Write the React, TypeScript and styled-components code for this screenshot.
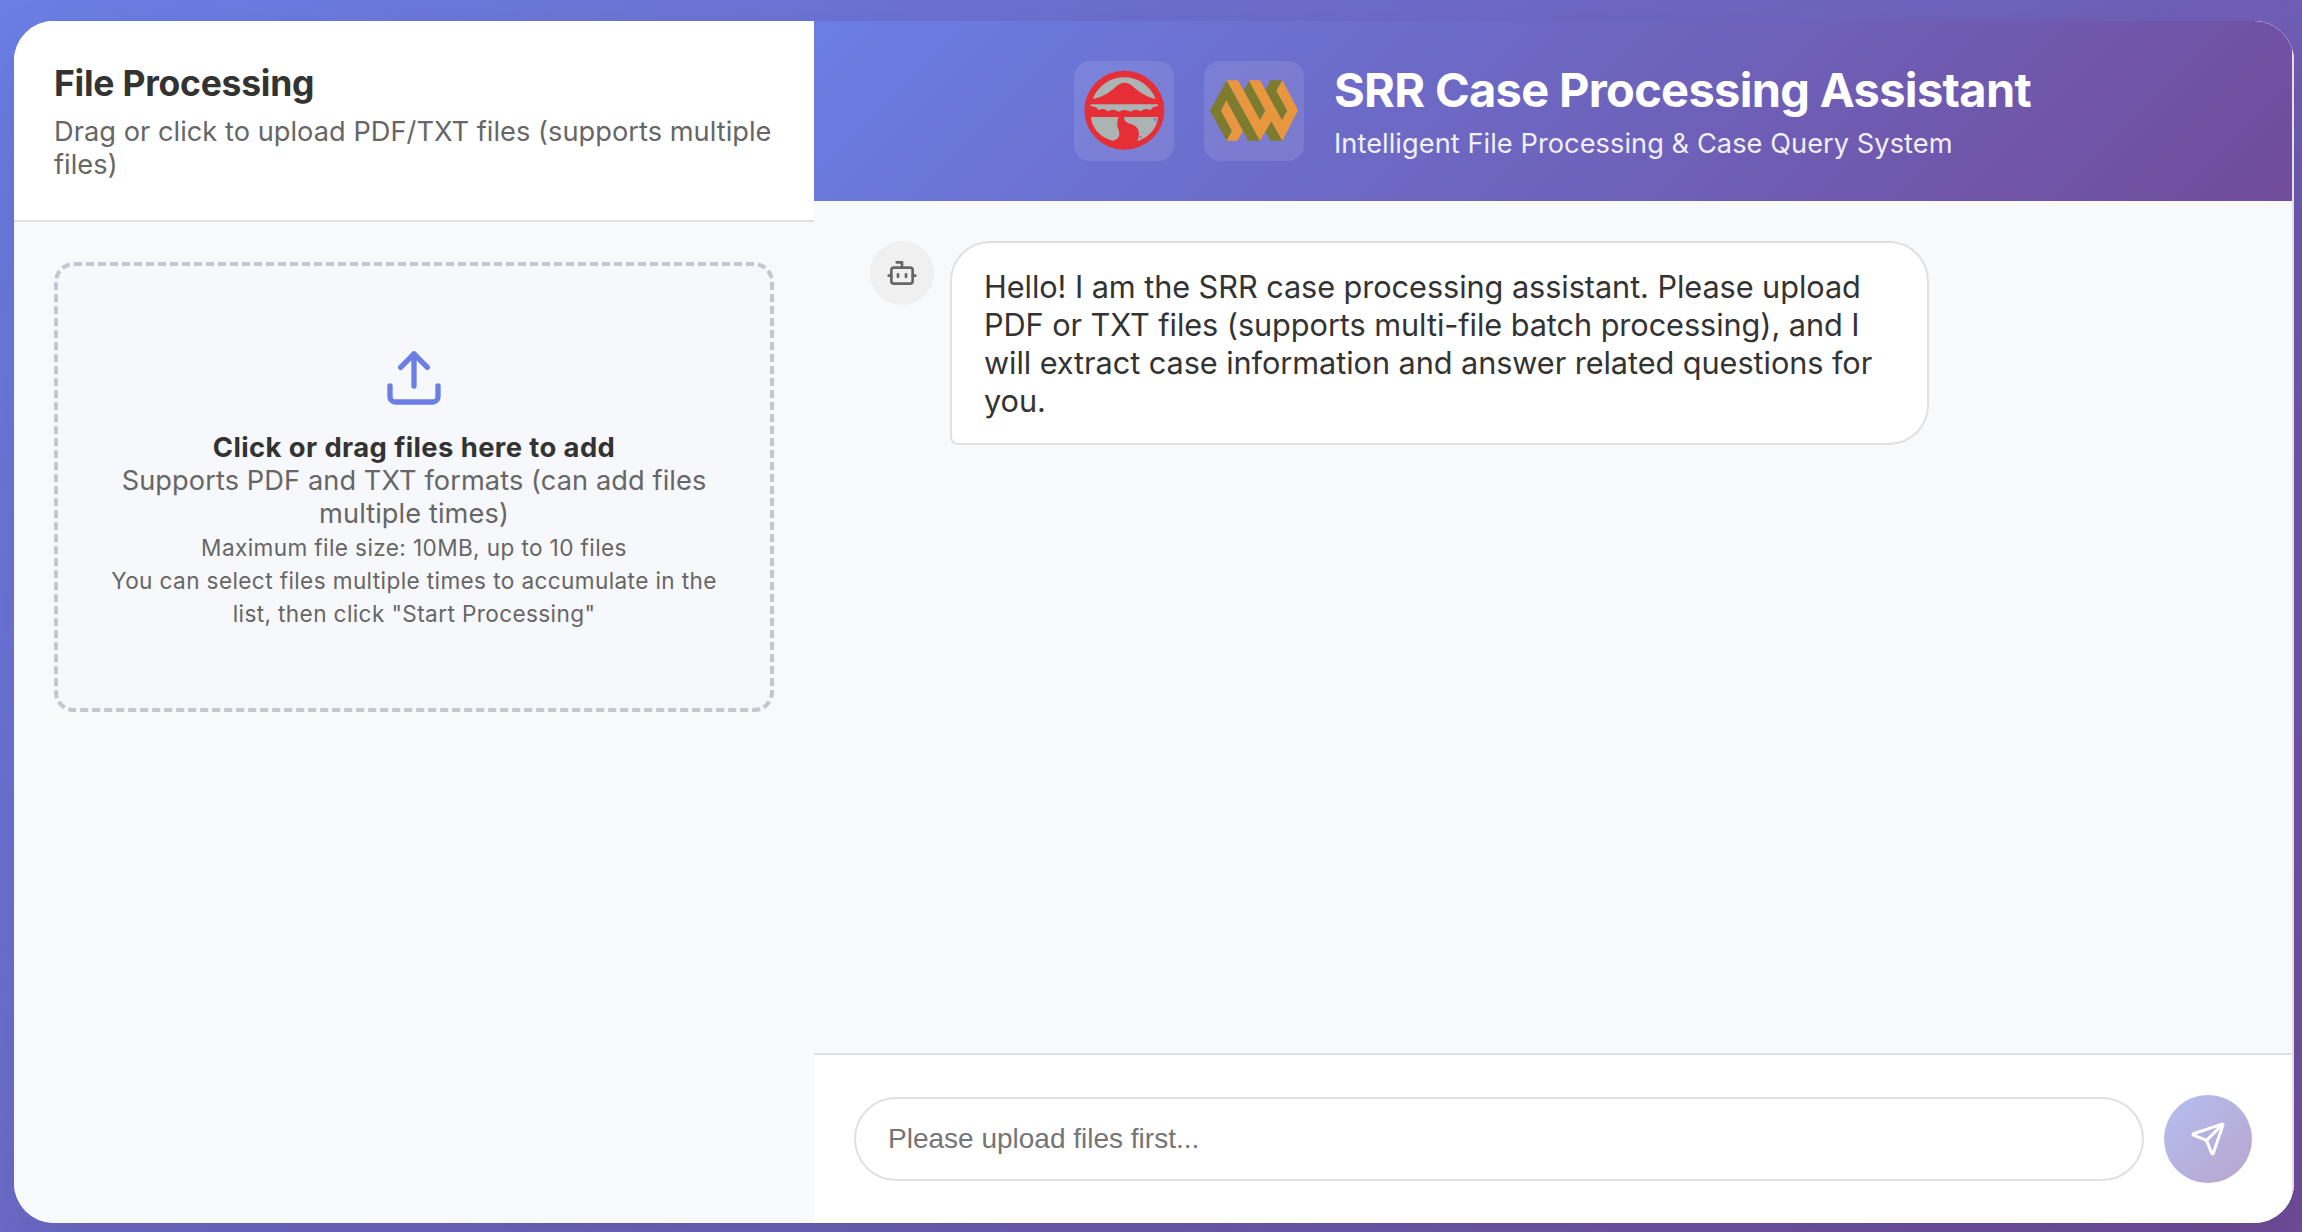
import React from "react";
import styled, { createGlobalStyle } from "styled-components";
import { Bot, Send, Upload } from "lucide-react";

const GlobalStyle = createGlobalStyle`
  * { box-sizing: border-box; margin: 0; padding: 0; }
  body {
    margin: 0;
    font-family: Inter, "Liberation Sans", sans-serif;
    color: #333;
    -webkit-font-smoothing: antialiased;
  }
`;

const brandGradient = "linear-gradient(135deg, #6a7ee4 0%, #714c9b 100%)";

const Page = styled.div`
  height: 1232px;
  padding: 21px 8px 9px 14px;
  overflow: hidden;
  background: ${brandGradient};
`;

const Shell = styled.div`
  display: flex;
  width: 2280px;
  height: 1202px;
  border-radius: 40px;
  overflow: hidden;
  background: #fff;
  box-shadow: 0 40px 80px rgba(0, 0, 0, 0.1);
`;

const Sidebar = styled.aside`
  display: flex;
  flex-direction: column;
  width: 800px;
  background: #f8f9fb;
`;

const SidebarHeader = styled.header`
  height: 201px;
  padding: 41px 40px 0;
  background: #fff;
  border-bottom: 2px solid #e0e0e0;
`;

const SidebarTitle = styled.h2`
  font-size: 35.5px;
  line-height: 44px;
  font-weight: 700;
  letter-spacing: -0.25px;
  white-space: nowrap;
`;

const SidebarHint = styled.p`
  margin-top: 9px;
  font-size: 27.2px;
  line-height: 33px;
  letter-spacing: 0.04px;
  color: #666;
  white-space: nowrap;
`;

const DropZone = styled.div`
  display: flex;
  flex-direction: column;
  align-items: center;
  height: 450px;
  margin: 40px;
  padding-top: 80px;
  border: 4px dashed #c6c6d0;
  border-radius: 20px;
  background: #f7f8fb;
  text-align: center;
`;

const UploadIcon = styled(Upload)`
  margin-bottom: 21px;
  color: #6a7ee4;
`;

const DropTitle = styled.p`
  font-size: 27.4px;
  font-weight: 700;
  line-height: 33px;
  letter-spacing: 0.4px;
  white-space: nowrap;
`;

const DropText = styled.p`
  margin-bottom: 1px;
  font-size: 27.2px;
  line-height: 33px;
  letter-spacing: 0.09px;
  color: #666;
  white-space: nowrap;
`;

const DropNote = styled.p`
  font-size: 22.6px;
  line-height: 33px;
  letter-spacing: 0.38px;
  color: #666;
  white-space: nowrap;
`;

const Chat = styled.main`
  display: flex;
  flex: 1;
  flex-direction: column;
  background: #f8f9fb;
  border-right: 2px solid #e0e0e0;
`;

const ChatHeader = styled.header`
  display: flex;
  align-items: center;
  justify-content: center;
  gap: 30px;
  height: 180px;
  color: #fff;
  background: ${brandGradient};
`;

const LogoTile = styled.div`
  width: 100px;
  height: 100px;
  border-radius: 16px;
  background: rgba(255, 255, 255, 0.1);
  svg { display: block; }
`;

const Heading = styled.div`
  width: 698px;
  white-space: nowrap;
`;

const AppTitle = styled.h1`
  font-size: 47px;
  line-height: 56px;
  font-weight: 700;
  letter-spacing: -0.69px;
`;

const AppSubtitle = styled.p`
  margin-top: 10px;
  font-size: 27.2px;
  line-height: 32px;
  letter-spacing: 0.06px;
  opacity: 0.9;
`;

const Messages = styled.section`
  flex: 1;
  display: flex;
  align-items: flex-start;
  gap: 16px;
  padding: 40px 56px;
`;

const Avatar = styled.div`
  display: flex;
  align-items: center;
  justify-content: center;
  width: 64px;
  height: 64px;
  border-radius: 50%;
  color: #666;
  background: #f0f0f0;
`;

const Bubble = styled.div`
  width: 979px;
  height: 204px;
  padding: 25px 32px 23px;
  border: 2px solid #e0e0e0;
  border-radius: 40px 40px 40px 8px;
  background: #fff;
  font-size: 30.7px;
  line-height: 38px;
  letter-spacing: -0.07px;
  white-space: nowrap;
`;

const Composer = styled.footer`
  display: flex;
  align-items: center;
  gap: 20px;
  height: 170px;
  padding: 0 40px;
  border-top: 2px solid #e0e0e0;
  background: #fff;
`;

const MessageInput = styled.input`
  flex: 1;
  height: 84px;
  padding: 0 32px;
  border: 2px solid #e0e0e0;
  border-radius: 42px;
  background: #fff;
  font-family: "Liberation Sans", Arial, sans-serif;
  font-size: 28px;
  &::placeholder { color: #757575; opacity: 1; }
`;

const SendButton = styled.button`
  display: flex;
  align-items: center;
  justify-content: center;
  width: 88px;
  height: 88px;
  border: 0;
  border-radius: 50%;
  color: #fff;
  background: linear-gradient(135deg, #b4bef1 0%, #b8a5cd 100%);
`;

const LandscapeLogo = () => (
  <svg width="100" height="100" viewBox="42 33 300 300">
    <ellipse cx="193" cy="181" rx="120" ry="118.500" fill="#e62e36" />
    <g fill="#abb3b3">
      <path d="M98 147A101 101 0 0 1 287 147C262 142 240 128 224 114Q194 84 166 112C146 130 125 142 98 147Z" />
      <path d="M92 163H294V169Q276 169 272 181Q254 171 243 184Q226 174 211 185Q194 175 176 185Q160 174 143 184Q131 171 115 181Q111 169 92 169Z" />
      <path d="M93 201H176C170 213 170 226 176 240C182 256 174 271 158 272C120 262 95 235 93 201Z" />
      <path d="M194 201H294C292 235 267 261 232 274C237 262 239 248 234 238C227 222 205 224 196 214C192 209 192 204 194 201Z" />
    </g>
    <g fill="#7c82cc">
      <path d="M278 204H289V215Q281 213 278 204Z" />
      <circle cx="242" cy="261" r="3.500" />
      <circle cx="250" cy="246" r="1.500" />
    </g>
  </svg>
);

const WeaveLogo = () => (
  <svg width="100" height="100" viewBox="432 33 300 300">
    <g fill="#7d7b2e">
      <path d="M450 182L500 91L600 272H565L499 151L483 182L516 243L500 272Z" />
      <path d="M551 122L568 91L616 182L600 211Z" />
      <path d="M616 120L632 91H667L649 122L682 182L666 211Z" />
      <path d="M634 214L667 272H632L616 243Z" />
    </g>
    <g fill="#e9973e">
      <path d="M499 151L549 243L532 272H500L516 243L483 182Z" />
      <path d="M500 91H534L600 211L616 182L566 91H600L666 211L682 182L649 122L667 91L714 181L667 272L634 214L600 272Z" />
    </g>
  </svg>
);

const App = () => (
  <>
    <GlobalStyle />
    <Page>
      <Shell>
        <Sidebar>
          <SidebarHeader>
            <SidebarTitle>File Processing</SidebarTitle>
            <SidebarHint>
              Drag or click to upload PDF/TXT files (supports multiple
              <br />
              files)
            </SidebarHint>
          </SidebarHeader>
          <DropZone>
            <UploadIcon size={64} />
            <DropTitle>Click or drag files here to add</DropTitle>
            <DropText>
              Supports PDF and TXT formats (can add files
              <br />
              multiple times)
            </DropText>
            <DropNote>Maximum file size: 10MB, up to 10 files</DropNote>
            <DropNote>
              You can select files multiple times to accumulate in the
              <br />
              list, then click "Start Processing"
            </DropNote>
          </DropZone>
        </Sidebar>
        <Chat>
          <ChatHeader>
            <LogoTile><LandscapeLogo /></LogoTile>
            <LogoTile><WeaveLogo /></LogoTile>
            <Heading>
              <AppTitle>SRR Case Processing Assistant</AppTitle>
              <AppSubtitle>Intelligent File Processing &amp; Case Query System</AppSubtitle>
            </Heading>
          </ChatHeader>
          <Messages>
            <Avatar><Bot size={32} /></Avatar>
            <Bubble>
              Hello! I am the SRR case processing assistant. Please upload
              <br />
              PDF or TXT files (supports multi-file batch processing), and I
              <br />
              will extract case information and answer related questions for
              <br />
              you.
            </Bubble>
          </Messages>
          <Composer>
            <MessageInput placeholder="Please upload files first..." />
            <SendButton><Send size={36} /></SendButton>
          </Composer>
        </Chat>
      </Shell>
    </Page>
  </>
);

export default App;
